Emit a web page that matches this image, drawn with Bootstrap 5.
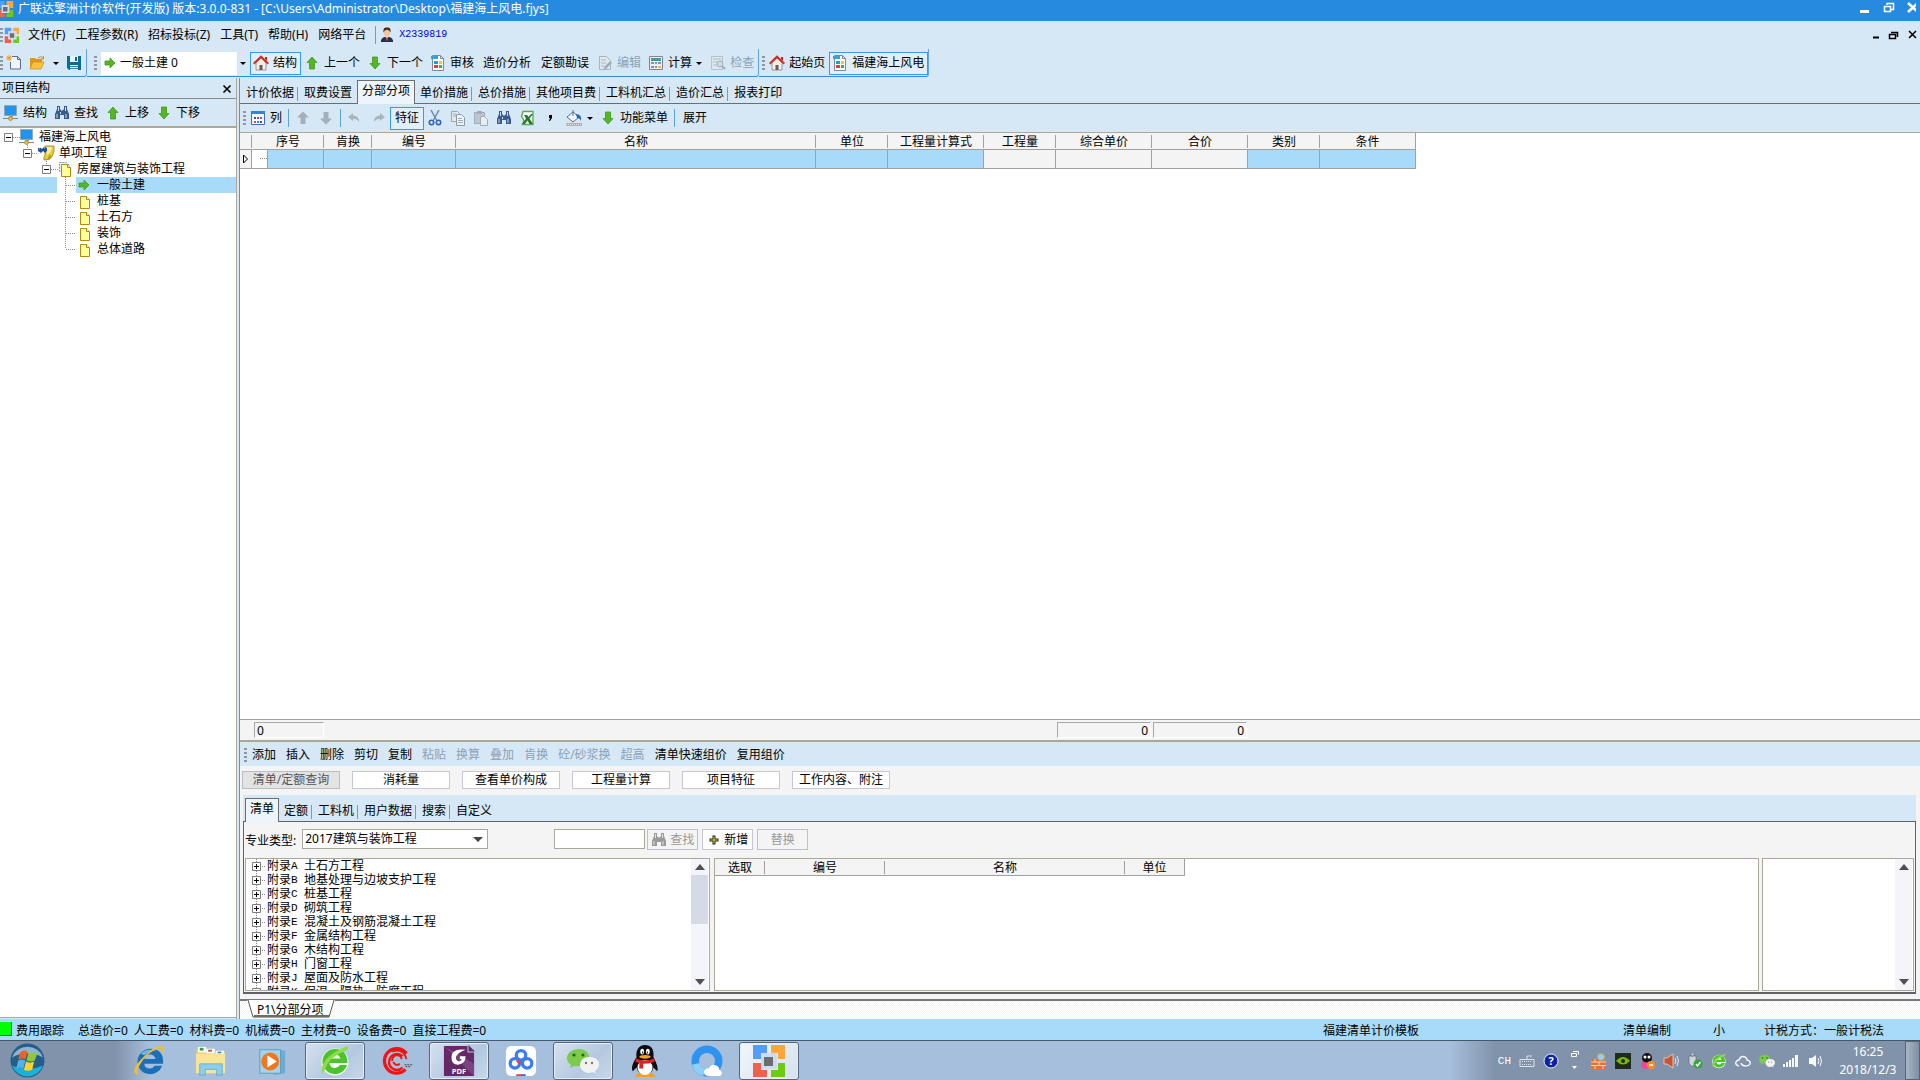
<!DOCTYPE html>
<html lang="zh-CN">
<head>
<meta charset="utf-8">
<meta name="viewport" content="width=device-width, initial-scale=1">
<title>广联达擎洲计价软件(开发版)</title>
<link href="https://cdn.jsdelivr.net/npm/bootstrap@5.3.0/dist/css/bootstrap.min.css" rel="stylesheet">
<style>
  :root { --bar:#d6e8f5; --pick:#a8dafa; --line:#a0a0a0; --tan:#aca899; --dis:#8aa2b8; }
  body { font:12px/16px "Noto Sans","Noto Sans CJK SC",sans-serif; color:#000; background:var(--bar); height:100vh; overflow:hidden; }
  button, input, select { font:inherit; color:inherit; }
  button { background:none; border:0; padding:0; white-space:nowrap; }
  svg { flex:none; display:block; }
  .ic { width:16px; height:16px; }
  .titlebar { height:21px; background:#268adf; color:#fff; }
  .titlebar .cap { padding-bottom:4px; font-family:"Noto Sans","Noto Sans CJK SC",sans-serif; }
  .menubar { height:28px; }
  .menubar button, .menubar a { padding:0 5px; color:#000; text-decoration:none; }
  .menubar a { color:#0000e0; font:10px/16px "Liberation Mono",monospace; }
  .grip { width:3px; height:14px; margin:0 4px 0 3px; background:repeating-linear-gradient(#8d98a3 0 2px,transparent 2px 4px); }
  .vsep { width:1px; height:18px; margin:0 3px 0 2px; background:#5ba3de; }
  .tools { height:29px; padding-bottom:1px; }
  .tgroup { height:28px; padding-top:1px; border-right:1px solid #5aa6e6; border-bottom:1px solid #2f8ce0; border-radius:0 0 3px 0; }
  .tgroup-main { padding-left:4px; }
  .gridtools { height:28px; }
  .tb { display:flex; align-items:center; gap:4px; height:23px; padding:0 4px 0 3px; }
  .tb.txt { padding:0 5px; }
  .tb.on { border:1px solid #3399ff; padding:0 3px 0 2px; background:#e2eefa; }
  .tb.txt.on { padding:0 4px; }
  .tb:disabled { color:var(--dis); }
  .caret { width:0; height:0; border:3px solid transparent; border-top-color:#000; border-bottom:0; }
  .combo { width:148px; height:23px; background:#fff; margin-right:1px; position:relative; padding-left:1px; }
  .combo select { appearance:none; border:0; background:none; outline:0; padding:0 2px; }
  .combo .caret, .pick .caret { position:absolute; right:3px; top:10px; pointer-events:none; }
  .combo .drop { position:absolute; right:0; top:0; width:12px; height:100%; background:var(--bar); pointer-events:none; }
  .side { width:237px; border-right:1px solid var(--tan); }
  .side-head { height:21px; padding:2px 4px 0 2px; border-bottom:1px solid #8a8a8a; }
  .side-tools { height:27px; }
  .tree { border-top:2px solid var(--tan); border-bottom:1px solid var(--tan); background:#fff; margin-bottom:1px; padding-top:1px; }
  .tree li { display:flex; height:16px; line-height:16px; }
  .tree li.sel { background:var(--pick); }
  .work { margin-left:2px; border-left:1px solid #7f8b96; }
  .tabs { height:26px; border-bottom:1px solid #6d6d6d; padding-left:1px; }
  .tabs button { height:20px; padding:0 5px; align-self:flex-end; }
  .tabs button.cut::after { content:""; float:right; width:1px; height:14px; margin:2px -4px 0 2px; background:#5ba3de; }
  .tabs button.act { height:24px; padding:0 4px 3px; border:1px solid #6d6d6d; border-bottom:0; background:#eef4fc; margin-bottom:-1px; }
  .grid { border-top:1px solid var(--tan); background:#fff; }
  .sheet { table-layout:fixed; border-collapse:separate; border-spacing:0; }
  .w12 { width:12px; } .w48 { width:48px; } .w50 { width:50px; } .w60 { width:60px; } .w72 { width:72px; } .w84 { width:84px; }
  .w96 { width:96px; } .w120 { width:120px; } .w240 { width:240px; } .w360 { width:360px; }
  .sheet th { height:17px; line-height:15px; padding:0; font-weight:400; text-align:center; background:#f4f4f4; border-bottom:1px solid var(--line); background-image:linear-gradient(var(--line),var(--line)); background-size:1px 13px; background-position:right 2px; background-repeat:no-repeat; }
  .sheet th:last-child { border-right:1px solid var(--line); background-image:none; }
  .sheet td { height:19px; padding:0; border-right:1px solid var(--line); border-bottom:1px solid var(--line); background:var(--pick); }
  .sheet td.off { background:#f4f4f4; }
  .sheet td.first { background:linear-gradient(90deg,#fff 15px,var(--line) 15px 16px,var(--pick) 16px); }
  .sum { height:23px; background:#f4f4f4; border-top:1px solid var(--line); border-bottom:2px solid var(--tan); padding:2px 0 0 14px; gap:2px; }
  .sum output { width:94px; height:16px; line-height:15px; border:1px solid #a8a8a8; border-right-color:#fff; border-bottom-color:#fff; padding:0 2px; text-align:right; }
  .sum .count { width:70px; text-align:left; margin-right:731px; }
  .acts { height:24px; padding:2px 0 0 1px; }
  .lower { background:#f4f4f4; }
  .switches { padding:5px 2px 6px; gap:12px; }
  .switches button { width:98px; height:18px; line-height:14px; border:1px solid #c3c7d6; background:#fff; }
  .switches button.cur { background:#e3e3e3; border-color:#b9bdc9; color:#555; }
  .tabs2 { margin:0 4px 0 3px; padding-left:2px; background:var(--bar); height:26px; border-bottom:0; }
  .frame { margin:0 4px 0 3px; height:173px; border:1px solid #5f6164; border-bottom-width:2px; padding:7px 1px 1px; }
  .pick { width:186px; height:20px; position:relative; margin:0 66px 0 6px; }
  .pick select { appearance:none; width:100%; height:20px; padding:0 2px; line-height:16px; border:1px solid var(--tan); border-radius:0; background:#fff; }
  .pick .caret { border-width:5px; border-bottom:0; border-top-color:#444; right:5px; top:8px; }
  .find { width:91px; height:20px; border:1px solid var(--tan); background:#fff; margin-right:2px; }
  .pbtn { width:51px; height:21px; margin-right:4px; display:flex; align-items:center; justify-content:center; gap:3px; border:1px solid #c3c7d6; background:#fff; }
  .pbtn:disabled { background:#f4f4f4; color:#999; border-color:#bcc0cc; }
  .pane { border:1px solid var(--tan); background:#fff; overflow:hidden; }
  .list { width:465px; }
  .list li { display:flex; height:14px; line-height:14px; }
  .list b { font:11px/14px "Liberation Mono",monospace; width:13px; }
  .sbar { width:17px; margin-right:1px; background:#f3f5fa; display:flex; flex-direction:column; align-items:center; justify-content:space-between; }
  .sbar i { width:0; height:0; border:5px solid transparent; border-bottom:6px solid #505050; border-top:0; margin:5px 0; }
  .sbar i:last-child { border-bottom:0; border-top:6px solid #505050; }
  .sbar .thumb { width:17px; height:49px; background:#d4dae6; margin-bottom:auto; }
  .mid { margin-left:4px; }
  .info { width:152px; margin-left:3px; }
  .sheets { height:20px; margin-top:5px; border-top:2px solid #77797c; background:repeating-conic-gradient(#fff 0 25%,#f4f4f4 0 50%) 0 0/2px 2px; }
  .sheettab { position:relative; margin-left:7px; width:88px; height:18px; }
  .sheettab svg { position:absolute; left:0; top:-1px; }
  .sheettab button { position:relative; padding-left:10px; line-height:17px; display:block; }
  .status { height:22px; background:var(--pick); border-bottom:1px solid #46586b; padding-top:3px; }
  .led { width:12px; height:14px; margin-bottom:4px; background:#0f0; border:1px solid #208020; border-width:0 1px 1px 0; }
  .sums { gap:6px; margin-left:6px; }
  .s2 { width:300px; } .s3 { width:90px; } .s4 { width:51px; } .s5 { width:156px; }
  .task { height:39px; background:linear-gradient(90deg,#8193aa 0 115px,#a6bfdc 150px,#a6bfdc calc(100% - 470px),#8193aa calc(100% - 425px)); color:#fff; }
  .task .slot { width:62px; height:38px; display:flex; align-items:center; justify-content:center; border:1px solid transparent; }
  .task .slot svg { width:32px; height:32px; }
  .task .start { width:54px; margin-right:64px; }
  .task .start svg { width:35px; height:35px; }
  .task .run { width:60px; margin:0 1px; border-color:#56687e; border-radius:3px; background:linear-gradient(135deg,#d6e1ef,#b3c8e0 60%,#c8d8ea); box-shadow:inset 0 0 0 1px #e4edf7; }
  .task .front { background:linear-gradient(135deg,#f2f6fa,#d5e1ee); }
  .tray { gap:8px; }
  .tray .lang { font:11px/16px "Liberation Mono",monospace; }
  .clock { width:74px; margin-right:-8px; font-size:12px; line-height:18px; text-align:center; }
  .peek { width:15px; height:39px; border:1px solid #56657a; background:linear-gradient(90deg,#a9b5c5,#7e8fa5); }
</style>
<script src="https://cdn.jsdelivr.net/npm/bootstrap@5.3.0/dist/js/bootstrap.bundle.min.js"></script>
</head>
<body class="d-flex flex-column">

<svg width="0" height="0" class="position-absolute" aria-hidden="true">
  <symbol id="logo" viewBox="0 0 32 32"><path d="M0 0h14v8H8v6H0z" fill="#559cff"/><path d="M18 0h14v14h-7V8h-7z" fill="#ffa53a"/><path d="M0 18h8v7h6v7H0z" fill="#f0604f"/><path d="M25 18h7v14H18v-7h7z" fill="#6dcc12"/><path d="M8 8h16v16H8z" fill="#cfdce9"/><path d="M11 12h9v9h-9z" fill="#6a6d71"/></symbol>
  <symbol id="up" viewBox="0 0 16 16"><path d="M8 2l5 5.500H10.500V14h-5V7.500H3z" fill="#55b427" stroke="#3f9a18" stroke-width=".8"/></symbol>
  <symbol id="down" viewBox="0 0 16 16"><path d="M8 14l5-5.500H10.500V2h-5V8.500H3z" fill="#55b427" stroke="#3f9a18" stroke-width=".8"/></symbol>
  <symbol id="upg" viewBox="0 0 16 16"><path d="M8 1.500l6 6H10.500V14h-5V7.500H2z" fill="#a5afb9"/></symbol>
  <symbol id="downg" viewBox="0 0 16 16"><path d="M8 14.500l6-6H10.500V2h-5V8.500H2z" fill="#a5afb9"/></symbol>
  <symbol id="right" viewBox="0 0 16 16"><path d="M13 8L8 3v3H3v4h5v3z" fill="#55b427" stroke="#3f9a18" stroke-width=".8"/></symbol>
  <symbol id="new" viewBox="0 0 16 16"><path d="M6 1.500h5.500l3 3v9.500H4.500V7" fill="#eef5fa" stroke="#5b6f85"/><path d="M11.500 1.500v3h3" fill="none" stroke="#5b6f85"/><path d="M3 0v6M0 3h6M1 1l4 4M5 1l-4 4" stroke="#f39a1e"/></symbol>
  <symbol id="open" viewBox="0 0 16 16"><path d="M1 3h5l1 1h6v3H4l-3 7z" fill="#d99a1a"/><path d="M4 7h11l-3 7H1z" fill="#fcc23d" stroke="#c98a15" stroke-width=".7"/><path d="M9 3q3-3 5 0M14.500 1v3h-3" fill="none" stroke="#d8901a"/></symbol>
  <symbol id="save" viewBox="0 0 16 16"><path d="M1 1h14v14H3l-2-2z" fill="#0d6c94"/><path d="M4 1h8v6H4z" fill="#e9f2f7"/><path d="M9 2h2v4H9zM1 7h14v2H1z" fill="#0d6c94"/><path d="M4 10h8v5H4z" fill="#d5edf7"/><path d="M4 11.500h8M4 13.500h8" stroke="#2d8cb4"/></symbol>
  <symbol id="home" viewBox="0 0 16 16"><path d="M3 8l5-5 5 5v7H3z" fill="#f1eeea" stroke="#8d8278" stroke-width=".8"/><path d="M12 2h2v4l-2-2z" fill="#b22"/><path d="M.7 8.700L8 1.700l7.300 7" fill="none" stroke="#cf2f24" stroke-width="2"/><path d="M6.500 10h3v5h-3z" fill="#6b5b52"/></symbol>
  <symbol id="doc" viewBox="0 0 16 16"><path d="M2.500.5h8l3 3v12h-11z" fill="#fff" stroke="#7d88a0"/><path d="M10.500.5v3h3" fill="none" stroke="#7d88a0"/><path d="M1 1h7v3H1z" fill="#35a7cf"/><path d="M4 6h4v3H4z" fill="#1f9be0"/><path d="M9 6h3v3H9z" fill="#f7c628"/><path d="M4 10h4v3H4z" fill="#e23f36"/><path d="M9 10h3v3H9z" fill="#37b34a"/></symbol>
  <symbol id="edit" viewBox="0 0 16 16"><path d="M2.500 1.500h7l4 4v9h-11z" fill="#dfe8ef" stroke="#a6b4c1"/><path d="M4 5h5M4 8h5M4 11h3" stroke="#a6b4c1"/><path d="M7 12l6-6 2 2-6 6H7z" fill="#a2afbc"/></symbol>
  <symbol id="calc" viewBox="0 0 16 16"><path d="M1.500 1.500h13v13h-13z" fill="#edf1f6" stroke="#857f9c"/><path d="M3 3h10v3H3z" fill="#3fa08a"/><path d="M3 7h3v2H3zM7 7h2v2H7zM10 7h3v2h-3zM3 11h3v2H3zM7 11h2v2H7z" fill="#7f93c0"/><path d="M10 11h3v2h-3z" fill="#f5b63a"/></symbol>
  <symbol id="check" viewBox="0 0 16 16"><path d="M1.500 1.500h11v13h-11z" fill="#dde7ef" stroke="#b5c2ce"/><path d="M3 4h8M3 7h4M3 10h4" stroke="#b0bdc9"/><circle cx="10" cy="9" r="3" fill="#cfdbe5" stroke="#9fadba"/><path d="M12 11l3 3" stroke="#9fadba" stroke-width="2"/></symbol>
  <symbol id="pc" viewBox="0 0 16 16"><path d="M1.500.5h12v10h-12z" fill="#1c96ee" stroke="#93a8ba"/><path d="M6 11h4v1H6z" fill="#8998a8"/><path d="M0 13.500h15" stroke="#7b8590"/><circle cx="7.500" cy="13.500" r="2" fill="#ffb52a" stroke="#a86e10" stroke-width=".6"/></symbol>
  <symbol id="bino" viewBox="0 0 16 16"><path d="M3 1h3v3l2 2 2-2V1h3v3l2 5v5h-5v-4H6v4H1V9l2-5z" fill="#3a5a8c"/><path d="M3 9v4M12 9v4M4.500 2v4M11.500 2v4M6.500 7v2" stroke="#c9dcf2"/></symbol>
  <symbol id="binog" viewBox="0 0 16 16"><path d="M3 1h3v3l2 2 2-2V1h3v3l2 5v5h-5v-4H6v4H1V9l2-5z" fill="#9a9a9a"/><path d="M3 9v4M12 9v4M4.500 2v4M11.500 2v4" stroke="#e4e4e4"/></symbol>
  <symbol id="cols" viewBox="0 0 16 16"><path d="M1.500 1.500h13v13h-13z" fill="#f7faff" stroke="#3a70b8"/><path d="M1 1h14v3H1z" fill="#3f7fd0"/><path d="M4 7h2v2H4zM10 11h2v2h-2z" fill="#2a52b0"/><path d="M7 7h2v2H7z" fill="#7a4ec0"/><path d="M10 7h2v2h-2zM4 11h2v2H4z" fill="#d44"/><path d="M7 11h2v2H7z" fill="#1c96ee"/></symbol>
  <symbol id="undo" viewBox="0 0 16 16"><path d="M1 7l5-4v2.500c4 0 6 2.500 6 6.500-2-2.500-3-3-6-3V11z" fill="#a9b4be"/></symbol>
  <symbol id="redo" viewBox="0 0 16 16"><path d="M15 7l-5-4v2.500c-4 0-6 2.500-6 6.500 2-2.500 3-3 6-3V11z" fill="#a9b4be"/></symbol>
  <symbol id="cut" viewBox="0 0 16 16"><path d="M4 0l5.500 10M12 0L6.500 10" stroke="#6f86a8" stroke-width="1.500"/><circle cx="4.500" cy="12.500" r="2.200" fill="none" stroke="#2f62b8" stroke-width="1.600"/><circle cx="11.500" cy="12.500" r="2.200" fill="none" stroke="#2f62b8" stroke-width="1.600"/></symbol>
  <symbol id="copy" viewBox="0 0 16 16"><path d="M1.500 1.500h6l2 2v8h-8z" fill="#e2e9f0" stroke="#9aa6b1"/><path d="M6.500 4.500h5l3 3v8h-8z" fill="#eef2f6" stroke="#8d99a5"/><path d="M3 4h3M3 6h3M8 8.500h4M8 10.500h5M8 12.500h5" stroke="#9fabb6"/></symbol>
  <symbol id="paste" viewBox="0 0 16 16"><path d="M1.500 2.500h10v11h-10z" fill="#bcc6cf" stroke="#a0acb7"/><path d="M4 1h5v3H4z" fill="#a0acb7"/><path d="M7.500 6.500h4l3 3v6h-7z" fill="#e8edf2" stroke="#a0acb7"/></symbol>
  <symbol id="xls" viewBox="0 0 16 16"><path d="M4 1.500h10v13H3.500q3-4-1-8z" fill="#fff" stroke="#5aa95a" stroke-width="1.400"/><path d="M5 5h3l1.500 2L12 4h2l-3.500 4.500L14 14h-3.500L8.500 10.500 6 14H3l4-5.500z" fill="#237a2a"/></symbol>
  <symbol id="bucket" viewBox="0 0 18 16"><path d="M2 7l6-5 6 5-6 5z" fill="#f4f8fc" stroke="#536f90"/><path d="M8 0v6" stroke="#536f90"/><path d="M11 4q6 0 5 7-1-3-4-3z" fill="#2c62b8"/><path d="M1 13h16v3H1z" fill="#b4aeb0"/><path d="M1 14.500h16" stroke="#e9e6e0" stroke-dasharray="1 1"/></symbol>
  <symbol id="user" viewBox="0 0 16 18"><path d="M1 17q0-5 5-6h4q5 1 5 6z" fill="#23304f"/><path d="M6 10h4l-2 5z" fill="#fff"/><path d="M7.500 11h1l.5 4-1 1-1-1z" fill="#c22"/><ellipse cx="8" cy="6" rx="3.600" ry="4.600" fill="#f1c59b"/><path d="M4 6q-1-6 4-6t4 6q-1-3-4-3T4 6z" fill="#4a2c1a"/></symbol>
  <symbol id="pg" viewBox="0 0 12 14"><path d="M1.500 1.500h6l3 3v9h-9z" fill="#ffff9c" stroke="#b8860b"/><path d="M7.500 1.500v3h3" fill="#fff" stroke="#b8860b"/></symbol>
  <symbol id="proj" viewBox="0 0 18 16"><path d="M8 1h9q1 8-4 13-3 1-6 1-1-2 1-5z" fill="#e6cc38" stroke="#8e7410" stroke-width=".7"/><path d="M9 2h6q0 5-5 8z" fill="#f9ee9a"/><path d="M8 15q4-1 4-5 2 1 3 1-2 4-7 4z" fill="#b8960f"/><path d="M1 3h3l1 1 2-2 3 1v3L8 8 6 6 4 8 1 6z" fill="#1f4e96"/><path d="M2 4h1M7 3h1" stroke="#9cc4f4"/></symbol>
  <symbol id="minus" viewBox="0 0 9 9"><path d="M.5.5h8v8h-8z" fill="#fff" stroke="#7d7d7d"/><path d="M2 4.500h5" stroke="#000"/></symbol>
  <symbol id="plus" viewBox="0 0 9 9"><path d="M.5.5h8v8h-8z" fill="#fff" stroke="#7d7d7d"/><path d="M2 4.500h5M4.500 2v5" stroke="#000"/></symbol>
  <symbol id="e360" viewBox="0 0 32 32"><circle cx="16" cy="17" r="13.500" fill="#f3fff0"/><path d="M16 4a12.500 12.500 0 1 0 12 16H21q-2 3-5 3-5 0-5.500-5h18Q28 4 16 4zm-5.500 9.500Q12 9.500 16 9.500t5.500 4z" fill="#4cc32d"/><path d="M3 29Q0 12 29 1q1 3-3 5Q10 12 6 24z" fill="#8fdc4a"/></symbol>
  <symbol id="wx" viewBox="0 0 32 32"><path d="M12 4C5 4 0 8 0 13q0 4 4 7l-1 3 4-2q8 1 11-3 4-3 4-6Q21 4 12 4z" fill="#7ccb4a"/><circle cx="7" cy="10" r="1.600" fill="#22651a"/><circle cx="16" cy="10" r="1.600" fill="#22651a"/><path d="M22 12c-6 0-9 4-9 8s4 8 9 8l4-1 3 2-1-3q4-3 4-6 0-8-10-8z" fill="#f2f2f0"/><circle cx="19" cy="18" r="1.200" fill="#777"/><circle cx="25" cy="18" r="1.200" fill="#777"/></symbol>
</svg>

<header class="titlebar d-flex align-items-center justify-content-between">
  <div class="cap d-flex align-items-center gap-1"><svg width="14" height="16" viewBox="6 0 26 32"><use href="#logo" width="32" height="32"/></svg><span>广联达擎洲计价软件(开发版) 版本:3.0.0-831 - [C:\Users\Administrator\Desktop\福建海上风电.fjys]</span></div>
  <svg class="me-1" width="60" height="21" viewBox="0 0 60 21" fill="none" stroke="#fff"><path d="M4 11.500h9" stroke-width="3"/><path d="M28.500 6.500h6v5h-6zM31 5V3.500h6.500v6H35" stroke-width="1.500"/><path d="M52 3l10 9M62 3l-10 9" stroke-width="2.500"/></svg>
</header>

<nav class="menubar d-flex align-items-center">
  <div class="grip m-0"></div>
  <svg class="ic" viewBox="-3 -1 33 33"><use href="#logo" width="32" height="32"/></svg>
  <div class="d-flex align-items-center ps-1 flex-grow-1">
    <button>文件(F)</button><button>工程参数(R)</button><button>招标投标(Z)</button><button>工具(T)</button><button>帮助(H)</button><button>网络平台</button>
    <div class="vsep ms-1 me-1"></div><svg width="14" height="16" viewBox="0 0 16 18"><use href="#user" width="16" height="18"/></svg><a href="#">X2339819</a>
  </div>
  <svg width="52" height="16" viewBox="0 0 52 16" fill="none" stroke="#000"><path d="M5 10.500h6" stroke-width="2"/><path d="M21.500 7.500h6v4h-6zM23 5.500h6.500V10" stroke-width="1.500"/><path d="M41 4l7 7M48 4l-7 7" stroke-width="1.600"/></svg>
</nav>

<div class="tools d-flex">
  <div class="tgroup d-flex align-items-center">
    <div class="grip m-0"></div>
    <button class="tb" aria-label="新建"><svg class="ic"><use href="#new"/></svg></button>
    <button class="tb" aria-label="打开"><svg class="ic"><use href="#open"/></svg><span class="caret ms-1"></span></button>
    <button class="tb" aria-label="保存"><svg class="ic"><use href="#save"/></svg></button>
  </div>
  <div class="tgroup tgroup-main d-flex align-items-center">
    <div class="grip"></div>
    <div class="combo d-flex align-items-center"><svg class="ic"><use href="#right"/></svg><select aria-label="单位工程"><option>一般土建 0</option></select><span class="drop"></span><span class="caret"></span></div>
    <button class="tb on"><svg class="ic"><use href="#home"/></svg>结构</button>
    <button class="tb"><svg class="ic"><use href="#up"/></svg>上一个</button>
    <button class="tb"><svg class="ic"><use href="#down"/></svg>下一个</button>
    <button class="tb"><svg class="ic"><use href="#doc"/></svg>审核</button>
    <button class="tb txt">造价分析</button>
    <button class="tb txt">定额勘误</button>
    <button class="tb" disabled><svg class="ic"><use href="#edit"/></svg>编辑</button>
    <button class="tb pe-1"><svg class="ic"><use href="#calc"/></svg>计算<span class="caret"></span></button>
    <button class="tb ps-1" disabled><svg class="ic"><use href="#check"/></svg>检查</button>
  </div>
  <div class="tgroup d-flex align-items-center">
    <div class="grip me-1"></div>
    <button class="tb ps-0"><svg class="ic"><use href="#home"/></svg>起始页</button>
    <button class="tb on"><svg class="ic"><use href="#doc"/></svg>福建海上风电</button>
  </div>
</div>

<main class="d-flex flex-grow-1 overflow-hidden">
  <aside class="side d-flex flex-column flex-shrink-0">
    <div class="side-head d-flex justify-content-between"><span>项目结构</span><button aria-label="关闭"><svg width="10" height="10" viewBox="0 0 10 10"><path d="M1.500 1.500l7 7M8.500 1.500l-7 7" stroke="#000" stroke-width="1.600"/></svg></button></div>
    <div class="side-tools d-flex align-items-center">
      <button class="tb"><svg class="ic"><use href="#pc"/></svg>结构</button>
      <button class="tb"><svg class="ic"><use href="#bino"/></svg>查找</button>
      <button class="tb"><svg class="ic"><use href="#up"/></svg>上移</button>
      <button class="tb"><svg class="ic"><use href="#down"/></svg>下移</button>
    </div>
    <ul class="tree list-unstyled flex-grow-1">
      <li><svg width="39" height="16"><path d="M13 8.500h7M27.500 14v2" stroke="#888" stroke-dasharray="1 1"/><use href="#minus" x="4" y="4" width="9" height="9"/><use href="#pc" x="19" width="16" height="16"/></svg>福建海上风电</li>
      <li><svg width="59" height="16"><path d="M27.500 0v4M32 8.500h6M46.500 14v2" stroke="#888" stroke-dasharray="1 1"/><use href="#minus" x="23" y="4" width="9" height="9"/><use href="#proj" x="37" width="18" height="16"/></svg>单项工程</li>
      <li><svg width="77" height="16"><path d="M46.500 0v4M51 8.500h7M65.500 14v2" stroke="#888" stroke-dasharray="1 1"/><use href="#minus" x="42" y="4" width="9" height="9"/><path d="M59.500 1.500h7l3 3v6h-10z" fill="#eaf3fb" stroke="#6aa0cc" stroke-dasharray="2 1"/><use href="#pg" x="60" y="2" width="12" height="14"/></svg>房屋建筑与装饰工程</li>
      <li class="sel"><svg width="97" height="16"><path d="M57 0h19v16H57z" fill="#fff"/><path d="M65.500 0v16M66 8.500h10" stroke="#888" stroke-dasharray="1 1"/><use href="#right" x="76" width="16" height="16"/></svg>一般土建</li>
      <li><svg width="97" height="16"><path d="M65.500 0v16M66 8.500h10" stroke="#888" stroke-dasharray="1 1"/><use href="#pg" x="79" y="2" width="12" height="14"/></svg>桩基</li>
      <li><svg width="97" height="16"><path d="M65.500 0v16M66 8.500h10" stroke="#888" stroke-dasharray="1 1"/><use href="#pg" x="79" y="2" width="12" height="14"/></svg>土石方</li>
      <li><svg width="97" height="16"><path d="M65.500 0v16M66 8.500h10" stroke="#888" stroke-dasharray="1 1"/><use href="#pg" x="79" y="2" width="12" height="14"/></svg>装饰</li>
      <li><svg width="97" height="16"><path d="M65.500 0v8M66 8.500h10" stroke="#888" stroke-dasharray="1 1"/><use href="#pg" x="79" y="2" width="12" height="14"/></svg>总体道路</li>
    </ul>
  </aside>

  <section class="work d-flex flex-column flex-grow-1 overflow-hidden">
    <div class="tabs d-flex flex-shrink-0">
      <button class="cut">计价依据</button><button>取费设置</button><button class="act">分部分项</button><button class="cut">单价措施</button><button class="cut">总价措施</button><button class="cut">其他项目费</button><button class="cut">工料机汇总</button><button class="cut">造价汇总</button><button>报表打印</button>
    </div>
    <div class="gridtools d-flex align-items-center flex-shrink-0">
      <div class="grip"></div>
      <button class="tb ps-0"><svg class="ic"><use href="#cols"/></svg>列</button>
      <div class="vsep"></div>
      <button class="tb" disabled aria-label="上移"><svg class="ic"><use href="#upg"/></svg></button>
      <button class="tb" disabled aria-label="下移"><svg class="ic"><use href="#downg"/></svg></button>
      <div class="vsep"></div>
      <button class="tb" disabled aria-label="撤消"><svg class="ic"><use href="#undo"/></svg></button>
      <button class="tb" disabled aria-label="重做"><svg class="ic"><use href="#redo"/></svg></button>
      <button class="tb txt on">特征</button>
      <button class="tb" aria-label="剪切"><svg class="ic"><use href="#cut"/></svg></button>
      <button class="tb" aria-label="复制"><svg class="ic"><use href="#copy"/></svg></button>
      <button class="tb" aria-label="粘贴"><svg class="ic"><use href="#paste"/></svg></button>
      <button class="tb" aria-label="查找"><svg class="ic"><use href="#bino"/></svg></button>
      <button class="tb" aria-label="导出Excel"><svg class="ic"><use href="#xls"/></svg></button>
      <button class="tb" aria-label="千分位"><svg class="ic" viewBox="0 0 16 16"><path d="M7 5h3v3l-2 3H7l1-3H7z" fill="#000"/></svg></button>
      <button class="tb pe-1" aria-label="填充色"><svg width="18" height="16"><use href="#bucket"/></svg><span class="caret"></span></button>
      <button class="tb"><svg class="ic"><use href="#down"/></svg>功能菜单</button>
      <div class="vsep"></div>
      <button class="tb txt">展开</button>
    </div>
    <div class="grid flex-grow-1 overflow-hidden">
      <table class="sheet">
        <colgroup><col class="w12"><col class="w72"><col class="w48"><col class="w84"><col class="w360"><col class="w72"><col class="w96"><col class="w72"><col class="w96"><col class="w96"><col class="w72"><col class="w96"></colgroup>
        <thead><tr><th></th><th>序号</th><th>肯换</th><th>编号</th><th>名称</th><th>单位</th><th>工程量计算式</th><th>工程量</th><th>综合单价</th><th>合价</th><th>类别</th><th>条件</th></tr></thead>
        <tbody><tr><td class="off"><svg width="11" height="12" viewBox="0 0 11 12"><path d="M3.500 2v8l4-4z" fill="none" stroke="#000"/></svg></td><td class="first"><svg width="15" height="2"><path d="M8 .5h7" stroke="#888" stroke-dasharray="1 1"/></svg></td><td></td><td></td><td></td><td></td><td></td><td class="off"></td><td class="off"></td><td class="off"></td><td></td><td></td></tr></tbody>
      </table>
    </div>
    <div class="sum d-flex flex-shrink-0"><output class="count">0</output><output>0</output><output>0</output></div>
    <div class="acts d-flex align-items-center flex-shrink-0">
      <div class="grip me-0"></div>
      <button class="tb txt">添加</button><button class="tb txt">插入</button><button class="tb txt">删除</button><button class="tb txt">剪切</button><button class="tb txt">复制</button><button class="tb txt" disabled>粘贴</button><button class="tb txt" disabled>换算</button><button class="tb txt" disabled>叠加</button><button class="tb txt" disabled>肯换</button><button class="tb txt" disabled>砼/砂浆换</button><button class="tb txt" disabled>超高</button><button class="tb txt">清单快速组价</button><button class="tb txt">复用组价</button>
    </div>
    <div class="lower flex-shrink-0">
      <div class="switches d-flex"><button class="cur">清单/定额查询</button><button>消耗量</button><button>查看单价构成</button><button>工程量计算</button><button>项目特征</button><button>工作内容、附注</button></div>
      <div class="tabs tabs2 d-flex"><button class="act">清单</button><button class="cut">定额</button><button class="cut">工料机</button><button class="cut">用户数据</button><button class="cut">搜索</button><button>自定义</button></div>
      <div class="frame d-flex flex-column">
        <div class="d-flex align-items-start mb-1 pb-1">
          <label for="kind" class="pt-1">专业类型:</label>
          <div class="pick"><select id="kind"><option>2017建筑与装饰工程</option></select><span class="caret"></span></div>
          <input class="find" aria-label="查找内容">
          <button class="pbtn" disabled><svg class="ic"><use href="#binog"/></svg>查找</button>
          <button class="pbtn"><svg width="14" height="14" viewBox="0 0 14 14"><path d="M5.500 2.500h3v3h3v3h-3v3h-3v-3h-3v-3h3z" fill="#222"/><path d="M7 3.500v7M3.500 7h7" stroke="#e8e02a"/></svg>新增</button>
          <button class="pbtn" disabled>替换</button>
        </div>
        <div class="d-flex flex-grow-1 overflow-hidden">
          <div class="pane list d-flex flex-shrink-0">
            <ul class="list-unstyled m-0 flex-grow-1">
              <li><svg width="21" height="14"><path d="M10.500 0v14M14 7.500h5" stroke="#888" stroke-dasharray="1 1"/><use href="#plus" x="6" y="3" width="9" height="9"/></svg>附录<b>A</b>土石方工程</li>
              <li><svg width="21" height="14"><path d="M10.500 0v14M14 7.500h5" stroke="#888" stroke-dasharray="1 1"/><use href="#plus" x="6" y="3" width="9" height="9"/></svg>附录<b>B</b>地基处理与边坡支护工程</li>
              <li><svg width="21" height="14"><path d="M10.500 0v14M14 7.500h5" stroke="#888" stroke-dasharray="1 1"/><use href="#plus" x="6" y="3" width="9" height="9"/></svg>附录<b>C</b>桩基工程</li>
              <li><svg width="21" height="14"><path d="M10.500 0v14M14 7.500h5" stroke="#888" stroke-dasharray="1 1"/><use href="#plus" x="6" y="3" width="9" height="9"/></svg>附录<b>D</b>砌筑工程</li>
              <li><svg width="21" height="14"><path d="M10.500 0v14M14 7.500h5" stroke="#888" stroke-dasharray="1 1"/><use href="#plus" x="6" y="3" width="9" height="9"/></svg>附录<b>E</b>混凝土及钢筋混凝土工程</li>
              <li><svg width="21" height="14"><path d="M10.500 0v14M14 7.500h5" stroke="#888" stroke-dasharray="1 1"/><use href="#plus" x="6" y="3" width="9" height="9"/></svg>附录<b>F</b>金属结构工程</li>
              <li><svg width="21" height="14"><path d="M10.500 0v14M14 7.500h5" stroke="#888" stroke-dasharray="1 1"/><use href="#plus" x="6" y="3" width="9" height="9"/></svg>附录<b>G</b>木结构工程</li>
              <li><svg width="21" height="14"><path d="M10.500 0v14M14 7.500h5" stroke="#888" stroke-dasharray="1 1"/><use href="#plus" x="6" y="3" width="9" height="9"/></svg>附录<b>H</b>门窗工程</li>
              <li><svg width="21" height="14"><path d="M10.500 0v14M14 7.500h5" stroke="#888" stroke-dasharray="1 1"/><use href="#plus" x="6" y="3" width="9" height="9"/></svg>附录<b>J</b>屋面及防水工程</li>
              <li><svg width="21" height="14"><path d="M10.500 0v14M14 7.500h5" stroke="#888" stroke-dasharray="1 1"/><use href="#plus" x="6" y="3" width="9" height="9"/></svg>附录<b>K</b>保温、隔热、防腐工程</li>
            </ul>
            <div class="sbar"><i></i><div class="thumb"></div><i></i></div>
          </div>
          <div class="pane mid flex-grow-1">
            <table class="sheet">
              <colgroup><col class="w50"><col class="w120"><col class="w240"><col class="w60"></colgroup>
              <thead><tr><th>选取</th><th>编号</th><th>名称</th><th>单位</th></tr></thead>
            </table>
          </div>
          <div class="pane info d-flex justify-content-end flex-shrink-0"><div class="sbar"><i></i><i></i></div></div>
        </div>
      </div>
      <div class="sheets"><div class="sheettab"><svg width="88" height="18" viewBox="0 0 88 18"><path d="M0 0h88l-5 17H6z" fill="#fff"/><path d="M1 0l5 17h76l5-17" fill="none" stroke="#555"/><path d="M7 16h75" stroke="#6f6d60" stroke-width="2"/></svg><button>P1\分部分项</button></div></div>
    </div>
  </section>
</main>

<footer class="status d-flex align-items-center flex-shrink-0">
  <span class="led"></span>
  <div class="d-flex ps-1 flex-grow-1"><span class="me-2">费用跟踪</span><div class="d-flex sums"><span>总造价=0</span><span>人工费=0</span><span>材料费=0</span><span>机械费=0</span><span>主材费=0</span><span>设备费=0</span><span>直接工程费=0</span></div></div>
  <span class="s2">福建清单计价模板</span><span class="s3">清单编制</span><span class="s4">小</span><span class="s5">计税方式：一般计税法</span>
</footer>

<div class="task d-flex align-items-center flex-shrink-0">
  <button class="slot start" aria-label="开始"><svg viewBox="0 0 34 34"><circle cx="17" cy="17" r="16.500" fill="#235f8c"/><path d="M2 22a16 16 0 0 0 30 0q-15 6-30 0z" fill="#1db0d8"/><path d="M2 14a16 16 0 0 1 30 0q-15-8-30 0z" fill="#8fb4cf"/><path d="M10 9q4-3 7-1l-2 8q-3-2-7 0z" fill="#f0622d"/><path d="M18 9q4 2 9 0l-3 8q-4 2-8 0z" fill="#8fc93a"/><path d="M8 17q3-2 7 0l-2 8q-3-2-7 0z" fill="#4fb3ee"/><path d="M15.500 18q4 2 8 0l-2 8q-4 2-8 0z" fill="#ffd02e"/></svg></button>
  <button class="slot" aria-label="Internet Explorer"><svg viewBox="0 0 34 34"><path d="M18 4a13.500 13.500 0 1 0 13 18H23q-2 3-5 3-6 0-6-5h20Q33 4 18 4zm-6 11q1-5 6-5t6 5z" fill="#1a6fb8"/><path d="M8 9q8-7 18-2-8-2-14 4z" fill="#6fb9ea"/><path d="M4 32Q-3 28 8 16 22 0 31 1q4 2 0 8 0-6-5-5Q15 8 8 20q-5 8-2 11z" fill="#f2bb30"/></svg></button>
  <button class="slot" aria-label="资源管理器"><svg viewBox="0 0 34 34"><path d="M1 5h10l2 3h19v22H1z" fill="#e3c35a"/><path d="M3 2h9v6H3z" fill="#fff"/><path d="M5 3h4v3H5z" fill="#3c9b48"/><path d="M12 4h9v5h-9zM22 6h9v4h-9z" fill="#fff"/><path d="M14 5h4v2h-4z" fill="#d6452e"/><path d="M24 7h4v2h-4z" fill="#2f8ae0"/><path d="M1 9h31v21H1z" fill="#f6e596"/><path d="M5 32V20h24v12h-6v-6H11v6z" fill="#8ccdea" stroke="#5ea9cd" stroke-width=".8"/></svg></button>
  <button class="slot" aria-label="媒体播放器"><svg viewBox="0 0 34 34"><path d="M18 4l12 2v24l-12 2z" fill="#6fadd0"/><path d="M3 5h22v25H3z" fill="#a5d3ea" stroke="#5d9dc0"/><circle cx="14" cy="17.500" r="9.500" fill="#f0771c"/><path d="M11 11l10 6.500L11 24z" fill="#fff"/></svg></button>
  <button class="slot run" aria-label="360浏览器"><svg viewBox="0 0 32 32"><use href="#e360"/></svg></button>
  <button class="slot" aria-label="快速看图"><svg viewBox="0 0 34 34" fill="none" stroke="#f31212"><path d="M27 9a13 13 0 1 0-1 17" stroke-width="3.500"/><path d="M23 12a8.500 8.500 0 1 0 0 12" stroke-width="2.500"/><path d="M12 17a5 5 0 0 1 10-2M20 20q-5 3-7-2M12 7q12-4 15 8" stroke-width="2"/><path d="M25 21h8M26 23h6" stroke="#4b3b3b" stroke-dasharray="2 1"/></svg></button>
  <button class="slot run" aria-label="福昕PDF"><svg viewBox="0 0 34 34"><path d="M1 1h25v7h7v25H1z" fill="#652768"/><path d="M1 1l18 18 14 14V20L20 12z" fill="#7b4480"/><path d="M27 0v7h7z" fill="#652768"/><path d="M24 5q-15-2-15 8 0 8 7 8 8-1 8-9h-6v3h2q-1 3-4 2-3-1-2-5 2-4 10-7z" fill="#fff"/><text x="17" y="31" font-family="Open Sans" font-size="8" font-weight="700" fill="#fff" text-anchor="middle">PDF</text></svg></button>
  <button class="slot" aria-label="百度网盘"><svg viewBox="0 0 34 34"><rect x="1" y="1" width="32" height="32" rx="6" fill="#fff"/><g fill="none" stroke="#3b7cf4" stroke-width="3.500"><circle cx="17" cy="11" r="5"/><circle cx="10.500" cy="19.500" r="5"/><circle cx="23.500" cy="19.500" r="5"/></g><path d="M13 16l3 4" stroke="#e8443c" stroke-width="3"/><path d="M12 31h5v2h-5z" fill="#e8443c"/><path d="M17 31h5v2h-5z" fill="#2d6fe8"/></svg></button>
  <button class="slot run" aria-label="微信"><svg viewBox="0 0 32 32"><use href="#wx"/></svg></button>
  <button class="slot" aria-label="QQ"><svg viewBox="0 0 34 34"><path d="M9 30h16l3 4H6z" fill="#f5a11b"/><path d="M17 0C10 0 7 6 8 13 4 19 2 24 4 28l4-4q2 8 9 8t9-8l4 4q2-4-4-15Q27 0 17 0z" fill="#0d0d0d"/><ellipse cx="17" cy="24" rx="8" ry="8" fill="#fff"/><ellipse cx="14" cy="7" rx="2" ry="3" fill="#fff"/><ellipse cx="20" cy="7" rx="2" ry="3" fill="#fff"/><path d="M14 7h1v2h-1zM19 7h1v2h-1z" fill="#000"/><ellipse cx="17" cy="12.500" rx="6" ry="2" fill="#f5a11b"/><path d="M7 14q10 5 20 0v4q-6 2-12 2v5h-4v-6l-4-1z" fill="#e32020"/></svg></button>
  <button class="slot" aria-label="QQ浏览器"><svg viewBox="0 0 34 34"><circle cx="17" cy="17" r="12.500" fill="none" stroke="#2f93f0" stroke-width="8"/><path d="M5 20a12.500 12.500 0 0 0 9 9" fill="none" stroke="#8fd0fa" stroke-width="8"/><path d="M18 33q-5-1-4-5 1-4 5-3 3-6 8-3 3 1 3 4 5 3 1 7z" fill="#fff"/></svg></button>
  <button class="slot run front" aria-label="擎洲计价"><svg viewBox="0 0 32 32"><use href="#logo" width="32" height="32"/></svg></button>
  <div class="tray d-flex align-items-center ms-auto">
    <span class="lang">CH</span>
    <svg class="ic" viewBox="0 0 16 16" fill="none" stroke="#dde3ea"><path d="M1 6.500h14v7H1zM8 6V3h5"/><path d="M3 8.500h10M3 11.500h10" stroke-dasharray="1 1"/></svg>
    <svg class="ic" viewBox="0 0 16 16"><circle cx="8" cy="8" r="7" fill="#1022a8" stroke="#e8ecf4"/><text x="8" y="12" font-family="Open Sans" font-weight="700" font-size="11" fill="#fff" text-anchor="middle">?</text></svg>
    <svg width="16" height="24" viewBox="0 0 16 24" fill="none" stroke="#fff"><path d="M4.500 4.500h5v3h-5zM6 2.500h5.500v3"/><path d="M5 17h5l-2.500 3z" fill="#fff" stroke="none"/></svg>
    <svg class="ic" viewBox="0 0 16 16"><path d="M0 6h10v2h5v8H0z" fill="#e2713a"/><path d="M0 9h15M0 12.500h15M4 6v3M8 9v3M4 12.500V16M12 12.500V16" stroke="#f7d5b5"/><circle cx="10" cy="4" r="3.500" fill="#8fd0f4" stroke="#d9a23a"/></svg>
    <svg class="ic" viewBox="0 0 16 16"><path d="M0 0h16v16H0z" fill="#1f2a1c"/><path d="M1 8q7-8 14 0-7 7-14 0z" fill="#76b900"/><circle cx="8" cy="8" r="2" fill="#1f2a1c"/></svg>
    <svg class="ic" viewBox="0 0 16 16"><circle cx="8" cy="5" r="5" fill="#111"/><path d="M3 8q5 3 9 0l2 6q-6 4-12 0z" fill="#f0479c"/><circle cx="6" cy="4" r="1.500" fill="#fff"/><circle cx="10" cy="4" r="1.500" fill="#fff"/><circle cx="12" cy="12" r="4" fill="#ff8c1a"/><path d="M10 12h4" stroke="#fff" stroke-width="1.500"/></svg>
    <svg class="ic" viewBox="0 0 16 16"><path d="M1 5h3l6-4v14l-6-4H1z" fill="#c8552f" stroke="#f4e4dc" stroke-width=".7"/><path d="M12 5q2 3 0 6M14 3q3 5 0 10" fill="none" stroke="#e9e3df"/></svg>
    <svg class="ic" viewBox="0 0 16 16"><path d="M2 3h7v7l-2 3H4L2 10zM4 0h3v3H4z" fill="#cfd4d8" stroke="#5d666e" stroke-width=".6"/><circle cx="11" cy="11" r="4.500" fill="#2fa53a"/><path d="M9 11l1.500 2 3-4" fill="none" stroke="#fff" stroke-width="1.400"/></svg>
    <svg class="ic" viewBox="0 0 32 32"><use href="#e360"/></svg>
    <svg class="ic" viewBox="0 0 16 16" fill="none" stroke="#f3f5f8" stroke-width="1.500"><path d="M4 13q-4-1-3-4 1-2 3-2 2-5 6-3 2 1 2 3 4 1 3 4-1 2-4 2-4 0-5-3"/></svg>
    <svg class="ic" viewBox="0 0 32 32"><use href="#wx"/></svg>
    <svg class="ic" viewBox="0 0 16 16"><path d="M0 11h2v3H0zM3 9h2v5H3zM6 7h2v7H6zM9 5h2v9H9zM12 2h3v12h-3z" fill="#f7f9fb"/></svg>
    <svg class="ic" viewBox="0 0 16 16"><path d="M2 5h3l4-3v12l-4-3H2z" fill="#f7f9fb"/><path d="M11 5q2 3 0 6M13 3q3 5 0 10" fill="none" stroke="#f7f9fb"/></svg>
    <div class="clock">16:25<br>2018/12/3</div>
    <div class="peek"></div>
  </div>
</div>
</body>
</html>
